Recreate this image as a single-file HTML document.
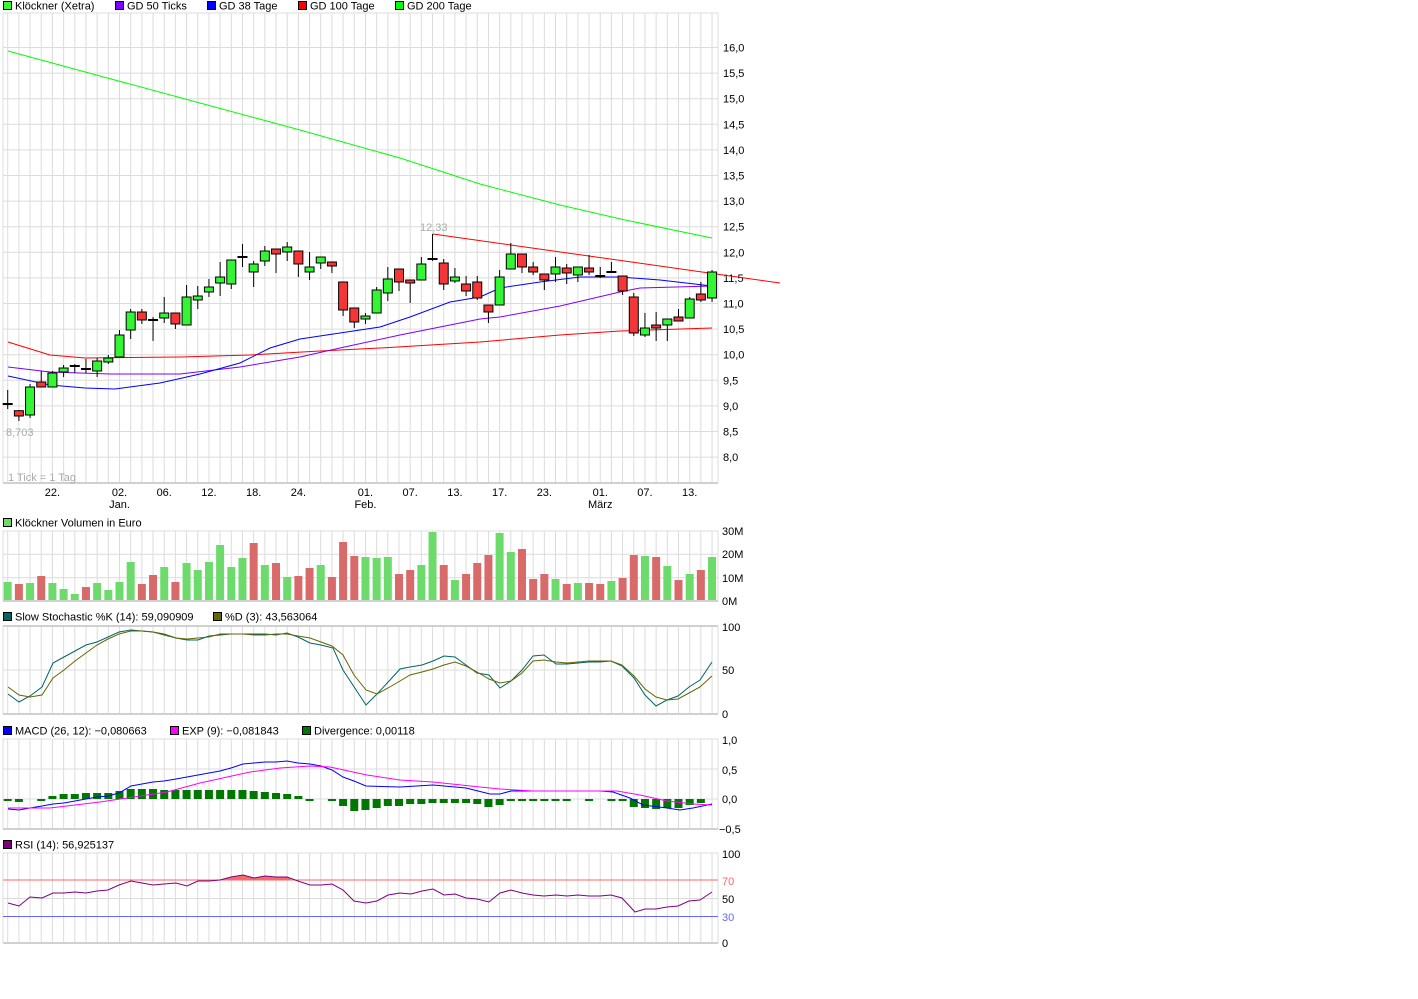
<!DOCTYPE html>
<html><head><meta charset="utf-8">
<style>
html,body{margin:0;padding:0;background:#fff;}
svg{display:block;font-family:"Liberation Sans",sans-serif;font-size:11px;}
</style></head>
<body>
<svg id="s" width="1418" height="999" xmlns="http://www.w3.org/2000/svg"></svg>
<script>
const S=document.getElementById('s');let h='';
const X=i=>7.7+11.18*i;
const L=718,R=718,LX=3;
function vgrid(t,b){for(let i=0;i<64;i++)h+=`<line x1="${X(i)}" y1="${t}" x2="${X(i)}" y2="${b}" stroke="#dcdcdc"/>`;
 h+=`<line x1="3" y1="${t}" x2="3" y2="${b}" stroke="#dcdcdc"/><line x1="718" y1="${t}" x2="718" y2="${b}" stroke="#dcdcdc"/>`;}
function hl(y,c,w){h+=`<line x1="3" y1="${y}" x2="718" y2="${y}" stroke="${c||'#dcdcdc'}" stroke-width="${w||1}"/>`;}
function txt(x,y,t,c,a){h+=`<text x="${x}" y="${y}" fill="${c||'#000'}" ${a||''}>${t}</text>`;}
function leg(x,y,c,t){h+=`<rect x="${x+0.5}" y="${y+0.5}" width="8" height="8" fill="${c}" stroke="#000"/>`;txt(x+12,y+8.5,t);}
function pl(pts,c,w){h+=`<polyline fill="none" stroke="${c}" stroke-width="${w||1}" points="${pts.map(p=>p.join(',')).join(' ')}"/>`;}
// ===== main
leg(3,1,'#33ff33','Klöckner (Xetra)');leg(115,1,'#7f00ff','GD 50 Ticks');leg(207,1,'#0000ff','GD 38 Tage');leg(298,1,'#ff0000','GD 100 Tage');leg(395,1,'#00ff00','GD 200 Tage');
vgrid(13,483);hl(13);
const labs=['16,0','15,5','15,0','14,5','14,0','13,5','13,0','12,5','12,0','11,5','11,0','10,5','10,0','9,5','9,0','8,5','8,0'];
labs.forEach((l,k)=>{const y=47.5+k*25.6;hl(y);txt(723,y+4,l);});
hl(483,'#d0d0d0',2);
const dl=[[4,'22.'],[10,'02.','Jan.'],[14,'06.'],[18,'12.'],[22,'18.'],[26,'24.'],[32,'01.','Feb.'],[36,'07.'],[40,'13.'],[44,'17.'],[48,'23.'],[53,'01.','März'],[57,'07.'],[61,'13.']];
dl.forEach(d=>{txt(X(d[0]),496,d[1],'#000','text-anchor="middle"');if(d[2])txt(X(d[0]),508,d[2],'#000','text-anchor="middle"');});
// MAs
pl([[8,51],[100,76],[200,103],[300,130],[400,158],[480,184],[560,205],[625,220],[712,238]],'#00ff00');
pl([[8,342],[50,355],[85,358],[180,357],[250,355],[320,351],[380,348],[480,342],[560,335],[620,331],[712,328]],'#ff0000');
pl([[8,367],[50,372],[110,374],[180,374],[240,367],[300,357],[340,348],[400,335],[480,319],[500,317],[560,306],[620,292],[640,288],[712,286]],'#7f00ff');
pl([[8,376],[50,385],[85,388],[115,389],[160,383],[200,374],[240,363],[270,348],[300,339],[340,333],[380,327],[410,317],[450,302],[480,297],[500,288],[540,282],[580,277],[620,277],[660,280],[712,286]],'#0000ff');
pl([[433,234],[780,283]],'#ff0000');
// candles: [o,c,hi,lo] in px; o>c means green(close higher => smaller y)
const C=[
[404,404,390,409],[410.7,416,410,421],[415,387,384,418],[382,387,371,387],[387,373,371,387],[372,368,365,377],[366,366,364,373],[369,369,359,373],[371,361,358,377],[362,358,355,364],[357,335,330,357],[330,312,309,339],[312,320,309,324],[320,320,317,341],[318,313,297,323],[313,324,313,329],[325,297,285,325],[300,296,286,309],[292,287,279,297],[283,277,262,296],[284,260,260,289],[257,257,244,267],[272,264,261,287],[261,251,246,266],[249,254,249,273],[252,247,242,261],[251,264,251,277],[272,267,252,280],[263,257,257,269],[262,266,262,273],[282,310,282,316],[308,322,308,328],[319,316,313,324],[313,290,287,313],[293,279,267,301],[269,282,269,291],[280,283,280,303],[280,264,257,280],[259,259,234,261],
[263,284,259,290],[281,277,268,283],[284,291,276,296],[282,298,276,300],[305,312,305,323],[305,277,270,305],[269,254,243,269],[254,267,254,273],[267,272,262,275],[274,280,274,290],[274,267,257,282],[268,273,264,284],[275,267,267,282],[268,272,255,275],[276,276,267,278],[272,272,262,273],[276,291,276,295],[297,333,293,336],[335,328,313,337],[325,328,312,341],[325,319,319,341],[317,321,309,321],[318,299,297,318],[294,300,282,302],[298,272,270,302]];
C.forEach((c,i)=>{const x=X(i);const[o,cl,hi,lo]=c;
 h+=`<line x1="${x}" y1="${hi}" x2="${x}" y2="${lo}" stroke="#000"/>`;
 if(Math.abs(o-cl)<1){h+=`<line x1="${x-5}" y1="${o}" x2="${x+5}" y2="${o}" stroke="#000" stroke-width="2"/>`;}
 else{const t=Math.min(o,cl),b=Math.max(o,cl);h+=`<rect x="${x-4.5}" y="${t}" width="9" height="${b-t}" fill="${o>cl?'#33f533':'#f53636'}" stroke="#000"/>`;}});
txt(420,231,'12,33','#aaa');txt(6,436,'8,703','#aaa');txt(8,481,'1 Tick = 1 Tag','#aaa');
// ===== volume
leg(3,518,'#6cdb6c','Klöckner Volumen in Euro');
vgrid(531,601);[531,554.3,577.7].forEach(y=>hl(y));hl(601,'#d0d0d0',2);
[['30M',531],['20M',554],['10M',578],['0M',601]].forEach(a=>txt(722,a[1]+4,a[0]));
const V='G582 R584 G583 R576 G583 G589 G594 R587 G583 G590 G582 G562 R584 R575 G567 R582 G563 G570 G562 G545 G567 G558 R543 G565 R563 G577 R576 R568 G565 R577 R542 R556 G557 G558 G557 R574 R570 G565 G532 R565 G580 R574 R563 R555 G533 G552 R549 R579 R574 G579 R584 G583 R583 R584 G581 R578 R555 G556 R557 G566 R580 G574 R570 G557'.split(' ');
V.forEach((v,i)=>{const y=+v.slice(1);h+=`<rect x="${X(i)-4}" y="${y}" width="8" height="${600-y}" fill="${v[0]=='G'?'#6cdb6c':'#d96a6a'}"/>`;});
// ===== stochastic
leg(3,612,'#006666','Slow Stochastic %K (14): 59,090909');leg(213,612,'#666600','%D (3): 43,563064');
vgrid(626,714);hl(626,'#d0d0d0',2);hl(670);hl(714,'#d0d0d0',2);
txt(722,631,'100');txt(722,674,'50');txt(722,718,'0');
pl([[8,694],[19,702],[30,696],[42,687],[53,663],[64,657],[75,651],[86,645],[97,642],[108,637],[119,632],[131,630],[142,631],[153,632],[164,634],[176,638],[187,640],[198,640],[209,636],[220,635],[231,634],[243,634],[254,634],[265,634],[276,635],[287,633],[298,637],[310,643],[321,645],[333,648],[343,670],[366,705],[377,694],[390,680],[400,669],[410,667],[422,665],[433,661],[444,656],[455,657],[466,665],[477,673],[489,675],[500,688],[511,681],[522,670],[533,656],[544,655],[556,664],[567,664],[578,663],[589,662],[600,662],[611,661],[622,666],[634,678],[645,695],[656,706],[667,700],[678,696],[689,687],[700,680],[712,662]],'#006666');
pl([[8,687],[19,695],[30,697],[42,695],[53,678],[64,670],[75,661],[86,653],[97,645],[108,639],[119,634],[131,631],[142,631],[153,632],[164,635],[176,638],[187,639],[198,638],[209,637],[220,634],[231,634],[243,634],[254,635],[265,635],[276,634],[287,634],[298,636],[310,638],[321,642],[332,646],[343,655],[354,675],[366,690],[377,694],[388,688],[400,681],[410,675],[422,672],[433,669],[444,665],[455,662],[466,666],[477,672],[489,679],[500,683],[511,681],[522,673],[533,661],[544,660],[556,662],[567,663],[578,662],[589,661],[600,661],[611,661],[622,665],[634,676],[645,689],[656,697],[667,700],[678,699],[689,693],[700,687],[712,676]],'#666600');
// ===== MACD
leg(3,726,'#0000ff','MACD (26, 12): −0,080663');leg(170,726,'#ff00ff','EXP (9): −0,081843');leg(302,726,'#007700','Divergence: 0,00118');
vgrid(739,829);hl(739);hl(769);hl(799);hl(829,'#d0d0d0',2);
txt(722,744,'1,0');txt(722,774,'0,5');txt(722,803,'0,0');txt(719,833,'−0,5');
const D=[801,802,null,801,796,794,794,793,793,793,791,789,789,789,790,790,790,790,790,790,790,790,791,792,793,794,796,797.5,null,801,806,811,810,808,806,806,804,804,803,803,803,803,804,807,805,801,801,801,801,801,801,null,801,null,801,801,807,808,809,808,808,805,803,null];
D.forEach((d,i)=>{if(d==null)return;const t=Math.min(d,799),b=Math.max(d,799);let hh=b-t;if(hh<2){h+=`<rect x="${X(i)-4}" y="799" width="8" height="2" fill="#007700"/>`;}else h+=`<rect x="${X(i)-4}" y="${t}" width="8" height="${hh}" fill="#007700"/>`;});
pl([[8,809],[19,810],[30,808],[42,806],[53,804],[64,803],[75,801],[86,799],[97,797],[108,796],[119,793],[131,786],[142,784],[153,782],[164,781],[176,779],[187,777],[198,775],[209,773],[220,771],[231,768],[243,764],[254,763],[265,762],[276,762],[287,761],[298,763],[310,764],[321,766],[332,770],[343,777],[354,781],[366,786],[400,787],[433,785],[466,788],[490,794],[500,794],[511,791],[533,791],[600,791],[613,792],[630,798],[643,805],[667,808],[680,810],[693,808],[712,804]],'#0000ff');
pl([[8,808],[50,808],[100,802],[167,792],[200,783],[250,772],[280,768],[310,766],[330,767],[367,775],[400,780],[433,782],[480,787],[500,789],[533,791],[617,791],[640,795],[667,801],[693,804],[712,805]],'#ff00ff');
// ===== RSI
leg(3,840,'#7f007f','RSI (14): 56,925137');
vgrid(853,943);hl(853);hl(898.5);hl(943,'#d0d0d0',2);
txt(722,858,'100');txt(722,885,'70','#ff6666');txt(722,903,'50');txt(722,921,'30','#6666ff');txt(722,947,'0');
const RS=[[8,903],[19,906],[30,897],[42,898],[53,893],[64,893],[75,892],[86,893],[97,891],[108,890],[119,885],[131,881],[142,883],[153,885],[164,884],[176,883],[187,886],[198,881],[209,881],[220,880],[231,877],[243,875],[254,878],[265,876],[276,877],[287,877],[298,881],[310,885],[321,885],[332,884],[343,890],[354,901],[366,903],[377,901],[388,895],[400,893],[411,894],[422,891],[433,889],[444,895],[455,894],[466,898],[477,899],[489,902],[500,893],[511,890],[522,893],[533,895],[544,896],[556,895],[567,896],[578,895],[589,896],[600,896],[611,895],[622,898],[635,912],[645,909],[656,909],[667,907],[678,906],[689,901],[700,900],[712,892]];
h+=`<path d="M207,880 L220,880 L231,877 L243,875 L254,878 L265,876 L276,877 L287,877 L292,880 Z" fill="#f56a6a"/>`;
hl(880,'#ff6666');hl(916.5,'#6666ff');
pl(RS,'#800080');
S.innerHTML=h;
</script>
</body></html>
